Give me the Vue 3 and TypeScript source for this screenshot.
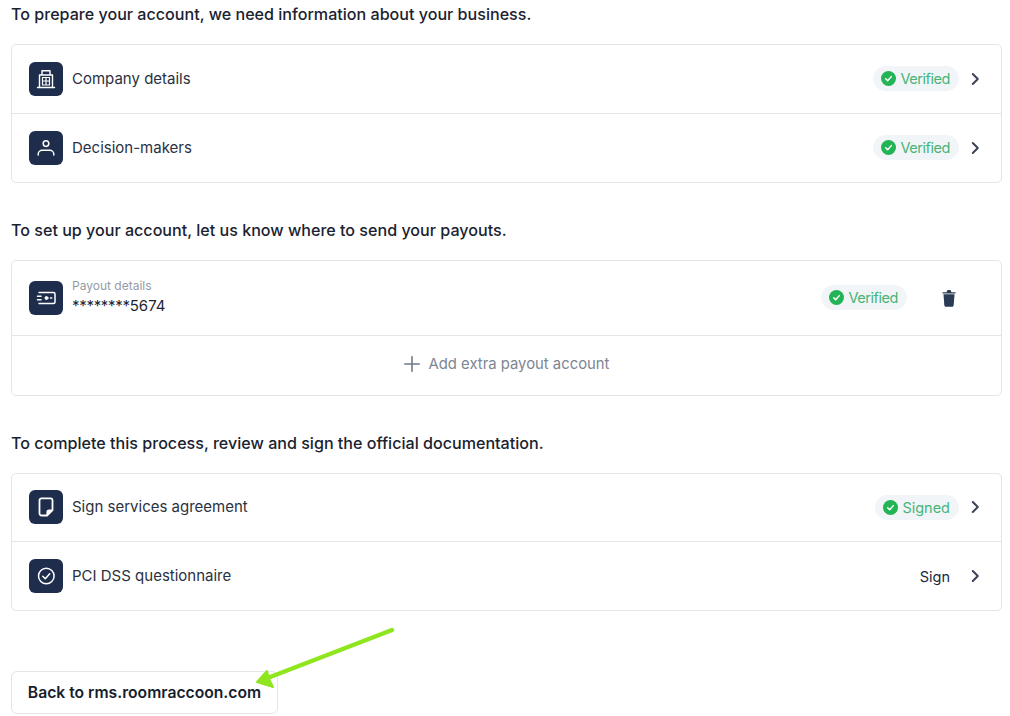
<template>
  <div class="page">
    <section v-for="section in sections" :key="section.title" class="section">
      <h2>{{ section.title }}</h2>
      <div class="card">
        <template v-for="row in section.rows" :key="row.label">
          <div class="row" :class="{ tall: row.sub }">
            <div class="tile">
              <svg viewBox="0 0 24 24" width="24" height="24" fill="none" stroke="#fff" stroke-width="1.5" stroke-linecap="round" stroke-linejoin="round">
                <template v-if="row.icon === 'building'">
                  <path d="M3.500 20.500h17M5.500 20.500V8h13v12.500M8 8V3.800h8V8" stroke-width="1.400" />
                  <path d="M8.500 10.500h7v7.500h-7zM12 10.500V18M8.500 14h7" stroke-width="1.200" />
                </template>
                <template v-else-if="row.icon === 'person'">
                  <circle cx="12" cy="7.600" r="2.800" />
                  <path d="M4.200 19v-.8c0-2.200 1.800-3.900 4-3.900h7.600c2.200 0 4 1.700 4 3.900v.8" />
                </template>
                <template v-else-if="row.icon === 'payout'">
                  <path d="M5 6.500h14.500a1.500 1.500 0 0 1 1.500 1.500v8a1.500 1.500 0 0 1-1.500 1.500H5" />
                  <path d="M3.500 10.300h3.500M3.500 13.700h3.500M16.500 12h1.200" />
                  <circle cx="12.500" cy="12" r="1.500" fill="#fff" stroke-width="1" />
                </template>
                <template v-else-if="row.icon === 'doc'">
                  <path d="M7.500 3.300h9c1.100 0 2 .9 2 2v9.700l-5.500 5.500H7.500c-1.100 0-2-.9-2-2V5.300c0-1.100.9-2 2-2z" stroke-width="1.800" />
                  <path d="M13 20.500V17c0-1.100.9-2 2-2h3.500z" fill="#fff" stroke-width="1.200" />
                </template>
                <template v-else>
                  <circle cx="12.300" cy="12" r="7.800" />
                  <path d="M8.800 12.300l2.500 2.400 4.400-4.900" />
                </template>
              </svg>
            </div>
            <div v-if="row.sub" class="stack">
              <span class="sub">{{ row.sub }}</span>
              <span class="masked"><span class="stars">********</span>5674</span>
            </div>
            <span v-else class="label">{{ row.label }}</span>
            <div class="right" :class="{ wide: row.trash }">
              <span v-if="row.badge" class="badge">
                <svg viewBox="0 0 16 16" width="15" height="15">
                  <circle cx="8" cy="8" r="8" fill="#22b455" />
                  <path d="M5 8.300l2.100 2.100L11 6" fill="none" stroke="#fff" stroke-width="1.600" stroke-linecap="round" stroke-linejoin="round" />
                </svg>
                <span :class="{ narrow: row.badge === 'Verified' }">{{ row.badge }}</span>
              </span>
              <span v-if="row.action" class="action">{{ row.action }}</span>
              <svg v-if="row.trash" class="trash" viewBox="0 0 14 18" width="14" height="18">
                <path d="M0.500 3.200h13v1.400H.5zM4.500 3.200l.7-1.800c.1-.3.4-.5.7-.5h2.200c.3 0 .6.2.7.5l.7 1.800z" fill="#2b3a55" />
                <path d="M1.500 5.300h11l-.8 10.900c-.1.9-.8 1.500-1.600 1.500H3.900c-.8 0-1.500-.6-1.600-1.500z" fill="#2b3a55" />
              </svg>
              <svg v-else class="chev" viewBox="0 0 9 14" width="9" height="14" fill="none" stroke="#3b4354" stroke-width="2" stroke-linecap="round" stroke-linejoin="round">
                <path d="M1.800 2l5 5-5 5" />
              </svg>
            </div>
          </div>
        </template>
        <div v-if="section.extra" class="extra">
          <svg viewBox="0 0 16 16" width="16" height="16" fill="none" stroke="#6f7a8a" stroke-width="1.600" stroke-linecap="round">
            <path d="M8 .8v14.400M.8 8h14.400" />
          </svg>
          <span>{{ section.extra }}</span>
        </div>
      </div>
    </section>
    <button class="back">Back to rms.roomraccoon.com</button>
    <svg class="arrow" width="150" height="70" viewBox="0 0 150 70" fill="none" stroke="#8fe61f" stroke-width="4.500" stroke-linecap="round" stroke-linejoin="round">
      <path d="M142 10L15 59" />
      <path d="M7 62L17 51l2 8 4 8z" fill="#8fe61f" stroke-width="2" />
    </svg>
  </div>
</template>

<script setup lang="ts">
type Row = {
  label: string
  icon: string
  badge?: string
  action?: string
  sub?: string
  trash?: boolean
}
type Section = {
  title: string
  rows: Row[]
  extra?: string
}
const sections: Section[] = [
  {
    title: 'To prepare your account, we need information about your business.',
    rows: [
      { label: 'Company details', icon: 'building', badge: 'Verified' },
      { label: 'Decision-makers', icon: 'person', badge: 'Verified' },
    ],
  },
  {
    title: 'To set up your account, let us know where to send your payouts.',
    rows: [{ label: 'Payout', icon: 'payout', badge: 'Verified', sub: 'Payout details', trash: true }],
    extra: 'Add extra payout account',
  },
  {
    title: 'To complete this process, review and sign the official documentation.',
    rows: [
      { label: 'Sign services agreement', icon: 'doc', badge: 'Signed' },
      { label: 'PCI DSS questionnaire', icon: 'check', action: 'Sign' },
    ],
  },
]
</script>

<style>
html,
body {
  background: #fff;
  overflow: hidden;
}
</style>

<style scoped>
.page {
  position: relative;
  width: 1010px;
  height: 716px;
  padding: 0 8px 0 11px;
  box-sizing: border-box;
  font-family: Inter, 'Liberation Sans', sans-serif;
  color: #1c2433;
}
.section {
  margin-bottom: 33px;
}
.section:last-of-type {
  margin-bottom: 60px;
}
h2 {
  margin: 0 0 16px;
  font-size: 16.100px;
  line-height: 28px;
  font-weight: 500;
  color: #1a2230;
}
.card {
  border: 1px solid #e3e5e8;
  border-radius: 5px;
  background: #fff;
}
.row {
  display: flex;
  align-items: center;
  height: 67.750px;
  padding-left: 17px;
  border-bottom: 1px solid #e3e5e8;
}
.row:last-child {
  border-bottom: none;
}
.row.tall {
  height: 74px;
}
.tile {
  width: 34px;
  height: 34px;
  border-radius: 6px;
  background: #1f2d4d;
  display: flex;
  align-items: center;
  justify-content: center;
  flex-shrink: 0;
  margin-right: 9px;
}
.label {
  font-size: 15px;
  padding-bottom: 1px;
  color: #2a3140;
}
.stack {
  display: flex;
  flex-direction: column;
  gap: 3px;
  padding-bottom: 2px;
}
.sub {
  font-size: 12px;
  line-height: 16px;
  color: #969ca6;
}
.masked {
  font-size: 15px;
  line-height: 18px;
  color: #1f2633;
}
.stars {
  letter-spacing: -0.3px;
}
.right {
  margin-left: auto;
  display: flex;
  align-items: center;
  padding-right: 21px;
}
.right.wide {
  padding-right: 45px;
}
.badge {
  display: flex;
  align-items: center;
  gap: 4px;
  height: 25px;
  padding: 0 9px 0 8px;
  border-radius: 13px;
  background: #f2f5f8;
  color: #46b477;
  font-size: 14.500px;
}
.narrow {
  letter-spacing: -0.45px;
}
.action {
  font-size: 14.500px;
  padding-right: 9px;
  color: #20283a;
}
.chev {
  margin-left: 12px;
}
.trash {
  margin-left: 35px;
}
.extra {
  height: 57px;
  padding-bottom: 2px;
  display: flex;
  align-items: center;
  justify-content: center;
  gap: 9px;
  color: #7d8592;
  font-size: 14.850px;
}
.back {
  display: block;
  width: 267px;
  height: 43px;
  padding: 0;
  background: #fff;
  border: 1px solid #e3e5e8;
  border-radius: 6px;
  font-family: inherit;
  font-size: 15.700px;
  font-weight: 600;
  color: #161e2e;
}
.arrow {
  position: absolute;
  left: 250px;
  top: 620px;
}
</style>
